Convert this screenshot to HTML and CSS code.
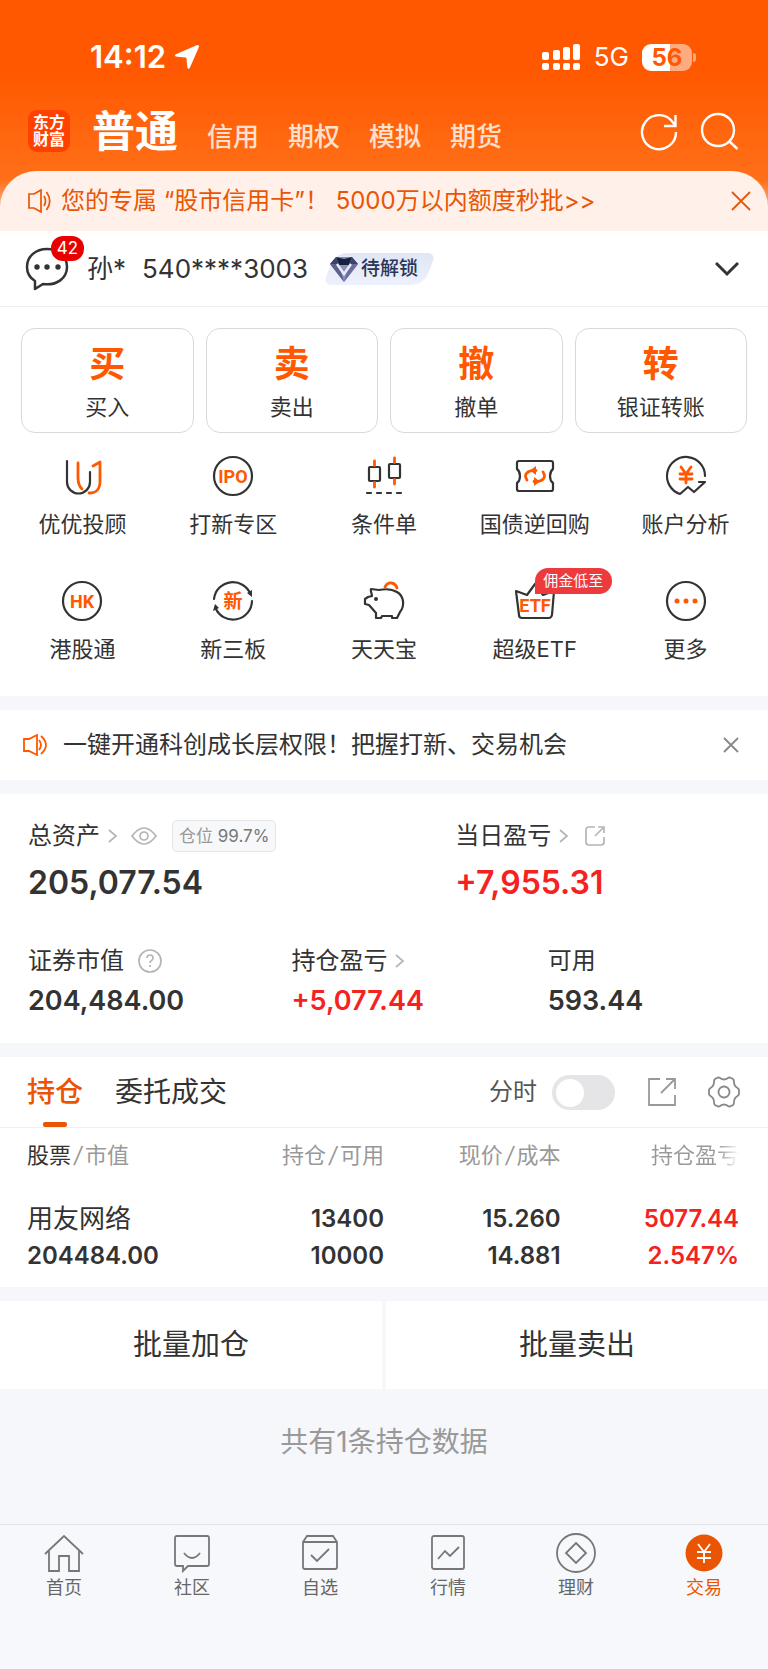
FILE: index.html
```html
<!DOCTYPE html>
<html lang="zh-CN">
<head>
    <meta charset="UTF-8">
    <meta name="viewport" content="width=device-width, initial-scale=1.0">
    <title>交易</title>
    <link rel="stylesheet" href="styles.css">
</head>
<body>
    <header class="header">
        <div class="status-bar">
            <div class="status-left">
                <span class="status-time">14:12</span>
                <svg width="26" height="26" viewBox="0 0 26 26"><path d="M22 1.500Q26 0 24.500 4L16 23.500Q14.500 26.500 13.300 23L12.500 14.500Q12.400 13.600 11.500 13.500L3 12.700Q-1 12 2.500 10Z" fill="#fff"/></svg>
            </div>
            <div class="status-right">
                <svg width="40" height="28" viewBox="0 0 40 28" fill="#fff">
                    <rect x="1" y="9" width="7" height="8" rx="2"/><rect x="12" y="7" width="7" height="10" rx="2"/><rect x="22" y="4" width="7" height="13" rx="2"/><rect x="32" y="1" width="7" height="16" rx="2"/>
                    <rect x="1" y="20" width="7" height="7" rx="2"/><rect x="12" y="20" width="7" height="7" rx="2"/><rect x="22" y="20" width="7" height="7" rx="2"/><rect x="32" y="20" width="7" height="7" rx="2"/>
                </svg>
                <span class="network">5G</span>
                <div class="battery"><span>56</span></div>
            </div>
        </div>
        <nav class="top-nav">
            <div class="logo"><span>东方</span><span>财富</span></div>
            <a href="#" class="nav-active">普通</a>
            <a href="#">信用</a>
            <a href="#">期权</a>
            <a href="#">模拟</a>
            <a href="#">期货</a>
            <div class="nav-actions">
                <button type="button" aria-label="刷新">
                    <svg width="40" height="40" viewBox="0 0 40 40" fill="none" stroke="#fff" stroke-width="2.400"><path d="M36 20A17 17 0 1 1 33 10.500L35.500 13.500M35.500 3V14H24"/></svg>
                </button>
                <button type="button" aria-label="搜索">
                    <svg width="40" height="40" viewBox="0 0 40 40" fill="none" stroke="#fff" stroke-width="2.400"><circle cx="18" cy="18" r="16"/><path d="M29.500 29.500L37.500 37"/></svg>
                </button>
            </div>
        </nav>
    </header>

    <div class="banner">
        <svg width="24" height="24" viewBox="0 0 24 24" fill="none" stroke="#ea5504" stroke-width="1.700"><path d="M2 5H7L14 1V23L7 19H2ZM17 7Q20 12 17 17M19.500 3Q26 12 19.500 21"/></svg>
        <a href="#">您的专属 “股市信用卡”！ 5000万以内额度秒批&gt;&gt;</a>
        <button type="button" aria-label="关闭">
            <svg width="20" height="20" viewBox="0 0 20 20" fill="none" stroke="#ea5504" stroke-width="1.800"><path d="M1 1L19 19M19 1L1 19"/></svg>
        </button>
    </div>

    <div class="account">
        <a href="#" class="message" aria-label="消息">
            <svg width="44" height="44" viewBox="0 0 44 44" fill="none" stroke="#333" stroke-width="2.500" stroke-linejoin="round"><path d="M22 2C11 2 2 9 2 20C2 27 5 31 10 34V42L18 37C32 39 42 31 42 20C42 9 33 2 22 2Z"/><g fill="#333" stroke="none"><circle cx="12" cy="20" r="2.700"/><circle cx="22" cy="20" r="2.700"/><circle cx="33" cy="20" r="2.700"/></g></svg>
            <span class="message-count">42</span>
        </a>
        <span class="account-name">孙*</span>
        <span class="account-number">540****3003</span>
        <a href="#" class="level">
            <svg width="28" height="28" viewBox="0 0 28 28"><path d="M6 2H22L28 9L14 27L0 9Z" fill="#8b8fba"/><path d="M6 2L14 4L22 2L19 10H9Z" fill="#16203f"/><path d="M0 9L6 2L9 10ZM28 9L22 2L19 10Z" fill="#3c4269"/><path d="M0 9L9 10L14 27Z" fill="#5b608f"/><path d="M28 9L19 10L14 27Z" fill="#6d6ba0"/><path d="M7 9L14 19L21 9" fill="none" stroke="#e8eaf6" stroke-width="2.500"/></svg>
            <span>待解锁</span>
        </a>
        <button type="button" class="expand" aria-label="展开">
            <svg width="24" height="16" viewBox="0 0 24 16" fill="none" stroke="#333" stroke-width="3"><path d="M1 2L12 13L23 2"/></svg>
        </button>
    </div>

    <main>
        <section class="trade">
            <div class="trade-buttons">
                <button type="button"><strong>买</strong>买入</button>
                <button type="button"><strong>卖</strong>卖出</button>
                <button type="button"><strong>撤</strong>撤单</button>
                <button type="button"><strong>转</strong>银证转账</button>
            </div>
            <div class="services">
                <a href="#">
                    <svg class="icon" viewBox="0 0 40 40"><path d="M5 5V26A11.500 11.500 0 0 0 28 26V16"/><path class="accent" d="M16 7V22C16 28 18 31 20 33M31 10L38 6V25C38 34 34 37 27 37"/></svg>
                    优优投顾
                </a>
                <a href="#">
                    <svg class="icon" viewBox="0 0 40 40"><circle cx="20" cy="20" r="19"/><text x="20" y="27" font-size="18">IPO</text></svg>
                    打新专区
                </a>
                <a href="#">
                    <svg class="icon" viewBox="0 0 40 40"><rect x="5" y="11" width="11" height="14" rx="1"/><rect x="25" y="8" width="11" height="14" rx="1"/><path d="M3 37H7M13 37H17M23 37H27M33 37H37"/><path class="accent" d="M10.500 5V9.500M10.500 26.500V31M30.500 2V6.500M30.500 23.500V28"/></svg>
                    条件单
                </a>
                <a href="#">
                    <svg class="icon" viewBox="0 0 40 40"><path d="M4 5H36Q38 5 38 7V13C34 16 34 24 38 27V33Q38 35 36 35H4Q2 35 2 33V27C6 24 6 16 2 13V7Q2 5 4 5Z"/><path class="accent" d="M12 24C8 18 13 14 21 14.500M28 16C32 22 27 26 19 25.500"/><path class="fill" d="M15 14.500L21 10V19ZM25 25.500L19 21V30Z"/></svg>
                    国债逆回购
                </a>
                <a href="#">
                    <svg class="icon" viewBox="0 0 40 40"><path d="M39 20A19 19 0 1 0 14 38L22 31L28 36L39 26H33"/><path class="accent" d="M15 11L20 18L25 11M20 18V27M14 18H26M14 23H26"/></svg>
                    账户分析
                </a>
                <a href="#">
                    <svg class="icon" viewBox="0 0 40 40"><circle cx="20" cy="20" r="19"/><text x="20" y="27" font-size="18">HK</text></svg>
                    港股通
                </a>
                <a href="#">
                    <svg class="icon" viewBox="0 0 40 40"><path d="M1 18A19 19 0 0 1 37.500 13M39 20A19 19 0 0 1 2.500 27"/><path class="dark" d="M34 12L39 9V16ZM0 30L2 23L6 27Z"/><text x="20" y="27" font-size="19">新</text></svg>
                    新三板
                </a>
                <a href="#">
                    <svg class="icon" viewBox="0 0 40 40"><path d="M8 15C8 12 6 10 7 8L15 9C20 8 28 8 33 11C40 15 41 25 36 31L33 37H28V35H18L17 37H12V32L5 24L1 23V18L4 16Z"/><circle class="dark" cx="12" cy="18" r="2"/><path class="accent" d="M21 6C24 0 31 1 33 7"/></svg>
                    天天宝
                </a>
                <a href="#">
                    <svg class="icon" viewBox="0 0 40 40"><path d="M1 10L12 14L20 3L28 14L39 10L37 34Q36 37 34 37H7Q4 37 4 34Z"/><text x="20" y="31" font-size="18">ETF</text></svg>
                    <span class="tag">佣金低至</span>
                    超级ETF
                </a>
                <a href="#">
                    <svg class="icon" viewBox="0 0 40 40"><circle cx="20" cy="20" r="19"/><circle class="fill" cx="11" cy="20" r="2.500"/><circle class="fill" cx="20" cy="20" r="2.500"/><circle class="fill" cx="29" cy="20" r="2.500"/></svg>
                    更多
                </a>
            </div>
        </section>

        <section class="notice">
            <svg width="24" height="22" viewBox="0 0 24 22" fill="none" stroke="#ff5800" stroke-width="1.800"><path d="M1 5H6L14 1V21L6 17H1ZM16 6Q20 11 16 16M18 2Q28 11 18 20"/></svg>
            <a href="#">一键开通科创成长层权限！把握打新、交易机会</a>
            <button type="button" aria-label="关闭">
                <svg width="16" height="16" viewBox="0 0 16 16" fill="none" stroke="#888" stroke-width="1.800"><path d="M1 1L15 15M15 1L1 15"/></svg>
            </button>
        </section>

        <section class="assets">
            <div class="assets-main">
                <div>
                    <div class="label">总资产
                        <svg class="arrow" viewBox="0 0 10 14"><path d="M1 1L8 7L1 13"/></svg>
                        <svg class="eye" viewBox="0 0 28 20"><path d="M2 10Q14-6 26 10Q14 26 2 10Z"/><circle cx="14" cy="10" r="4"/></svg>
                        <span class="position">仓位 <b>99.7%</b></span>
                    </div>
                    <div class="total">205,077.54</div>
                </div>
                <div>
                    <div class="label">当日盈亏
                        <svg class="arrow" viewBox="0 0 10 14"><path d="M1 1L8 7L1 13"/></svg>
                        <svg class="share" viewBox="0 0 20 20"><path d="M10 1H4Q1 1 1 4V16Q1 19 4 19H16Q19 19 19 16V11M10 10L18 2M13 1H19V7"/></svg>
                    </div>
                    <div class="total up">+7,955.31</div>
                </div>
            </div>
            <div class="assets-sub">
                <div>
                    <div class="label">证券市值
                        <svg class="help" viewBox="0 0 24 24"><circle cx="12" cy="12" r="11"/><path d="M9 9C9 5 15 5 15 9C15 12 12 11 12 14M12 16V18"/></svg>
                    </div>
                    <div class="amount">204,484.00</div>
                </div>
                <div>
                    <div class="label">持仓盈亏
                        <svg class="arrow" viewBox="0 0 10 14"><path d="M1 1L8 7L1 13"/></svg>
                    </div>
                    <div class="amount up">+5,077.44</div>
                </div>
                <div>
                    <div class="label">可用</div>
                    <div class="amount">593.44</div>
                </div>
            </div>
        </section>

        <section class="holdings">
            <div class="holdings-bar">
                <a href="#" class="tab active">持仓</a>
                <a href="#" class="tab">委托成交</a>
                <label class="switch-label" for="minute">分时</label>
                <input type="checkbox" class="switch" id="minute">
                <button type="button" aria-label="分享">
                    <svg width="28" height="28" viewBox="0 0 28 28" fill="none" stroke="#999" stroke-width="1.800"><path d="M12 1H1V27H27V17M18 1H27V11M13 15L26 2"/></svg>
                </button>
                <button type="button" aria-label="设置">
                    <svg width="32" height="32" viewBox="0 0 32 32" fill="none" stroke="#888" stroke-width="1.800"><path d="M9 2Q10.500 1 12 2Q16 5 20 2Q21.500 1 23 2L25 3Q26 4 26 6Q26 10 29.500 12Q31 13 31 14V18Q31 19 29.500 20Q26 22 26 26Q26 28 25 29L23 30Q21.500 31 20 30Q16 27 12 30Q10.500 31 9 30L7 29Q6 28 6 26Q6 22 2.500 20Q1 19 1 18V14Q1 13 2.500 12Q6 10 6 6Q6 4 7 3Z"/><circle cx="16" cy="16" r="5.500"/></svg>
                </button>
            </div>
            <table class="stocks">
                <thead>
                    <tr>
                        <th><b>股票</b><i>/</i>市值</th>
                        <th>持仓<i>/</i>可用</th>
                        <th>现价<i>/</i>成本</th>
                        <th class="fade">持仓盈亏</th>
                    </tr>
                </thead>
                <tbody>
                    <tr>
                        <td><span class="stock-name">用友网络</span>204484.00</td>
                        <td><span>13400</span>10000</td>
                        <td><span>15.260</span>14.881</td>
                        <td class="up"><span>5077.44</span>2.547%</td>
                    </tr>
                </tbody>
            </table>
        </section>

        <div class="batch">
            <button type="button">批量加仓</button>
            <button type="button">批量卖出</button>
        </div>

        <p class="summary">共有1条持仓数据</p>
    </main>

    <nav class="tab-bar">
        <a href="#">
            <svg viewBox="0 0 40 40"><path d="M1 21L20 3L39 21M5 18V38H15V23H25V38H35V18"/></svg>
            首页
        </a>
        <a href="#">
            <svg viewBox="0 0 40 40"><path d="M5 3H35Q37 3 37 5V31Q37 33 35 33H16L11 38V33H5Q3 33 3 31V5Q3 3 5 3ZM12 20Q20 30 28 20"/></svg>
            社区
        </a>
        <a href="#">
            <svg viewBox="0 0 40 40"><path d="M3 9L7 3H33L37 9V34Q37 36 35 36H5Q3 36 3 34ZM3 9H37M11 22L17 28L29 16"/></svg>
            自选
        </a>
        <a href="#">
            <svg viewBox="0 0 40 40"><rect x="4" y="3" width="32" height="33" rx="2"/><path d="M10 26L17 18L22 23L31 14"/></svg>
            行情
        </a>
        <a href="#">
            <svg viewBox="0 0 40 40"><circle cx="20" cy="20" r="19"/><path d="M20 10L30 20L20 30L10 20Z"/></svg>
            理财
        </a>
        <a href="#" class="current">
            <svg viewBox="0 0 40 40"><circle cx="20" cy="20" r="18.500"/><path d="M14 11L20 19L26 11M20 19V30M13 19H27M13 25H27"/></svg>
            交易
        </a>
    </nav>
</body>
</html>
```

FILE: styles.css
```css
* {
    box-sizing: border-box;
}

body {
    margin: 0;
    min-height: 100vh;
    display: flex;
    flex-direction: column;
    font-family: Inter, 'Noto Sans CJK SC', sans-serif;
    font-size: 24px;
    line-height: 32px;
    color: #333;
    background: linear-gradient(#ff5800 70px, #ff7019 180px, #f6f7fa 240px);
}

a {
    color: inherit;
    text-decoration: none;
}

button {
    padding: 0;
    border: none;
    background: none;
    font: inherit;
    color: inherit;
    cursor: pointer;
}

svg {
    display: block;
    flex-shrink: 0;
}

.header {
    color: #fff;
}

.status-bar {
    display: flex;
    justify-content: space-between;
    align-items: center;
    padding: 41px 76px 0 90px;
}

.status-left,
.status-right {
    display: flex;
    align-items: center;
}

.status-left {
    gap: 8px;
}

.status-time {
    font-size: 31px;
    font-weight: 600;
}

.network {
    margin: 0 13px;
    font-size: 26px;
}

.battery {
    position: relative;
    width: 50px;
    height: 27px;
    border-radius: 9px;
    background: linear-gradient(90deg, #fff 56%, #ffab80 56%);
    color: #ff5800;
    font-size: 24px;
    font-weight: 700;
    line-height: 27px;
    text-align: center;
}

.battery::after {
    content: "";
    position: absolute;
    top: 9px;
    right: -4px;
    width: 3px;
    height: 9px;
    border-radius: 0 4px 4px 0;
    background: #ffab80;
}

.top-nav {
    display: flex;
    align-items: flex-end;
    gap: 29px;
    padding: 28px 28px 19px;
    height: 98px;
    font-size: 26px;
    font-weight: 500;
    line-height: 30px;
    color: #ffe0cf;
}

.logo {
    width: 42px;
    height: 42px;
    padding: 4px 0;
    margin-right: -7px;
    border-radius: 9px;
    background: #ff4100;
    color: #fff;
    font-size: 16px;
    font-weight: 700;
    line-height: 17px;
    text-align: center;
}

.logo span {
    display: block;
}

.top-nav .nav-active {
    font-size: 43px;
    font-weight: 700;
    line-height: 42px;
    color: #fff;
}

.nav-actions {
    display: flex;
    gap: 20px;
    margin-left: auto;
}

.banner {
    display: flex;
    align-items: center;
    gap: 10px;
    height: 60px;
    padding: 0 17px 0 27px;
    border-radius: 36px 36px 0 0;
    background: #fff1ea;
    color: #ea5504;
}

.banner button,
.notice button {
    margin-left: auto;
}

.account {
    display: flex;
    align-items: center;
    height: 76px;
    padding: 0 29px 0 25px;
    border-bottom: 1px solid #eee;
    background: #fff;
    font-size: 26px;
}

.message {
    position: relative;
    margin-right: 18px;
}

.message-count {
    position: absolute;
    top: -11px;
    left: 26px;
    width: 33px;
    border-radius: 12px;
    background: #e80000;
    color: #fff;
    font-size: 17px;
    line-height: 25px;
    text-align: center;
}

.account-number {
    margin: 0 16px;
}

.level {
    position: relative;
    z-index: 0;
    display: flex;
    align-items: center;
    gap: 3px;
    height: 32px;
    padding: 0 17px 0 6px;
    color: #2c3558;
    font-size: 19px;
    font-weight: 500;
}

/* slanted plate behind the level name */
.level::before {
    content: "";
    position: absolute;
    inset: 0 5px;
    z-index: -1;
    border-radius: 12px 8px;
    background: linear-gradient(#e0e6f5, #edf1fd);
    transform: skewX(-20deg);
}

.expand {
    margin-left: auto;
}

main {
    flex: 1;
    background: #f6f7fa;
}

section {
    margin-bottom: 14px;
    background: #fff;
}

.trade {
    padding: 21px 7px 31px;
    font-size: 22px;
}

.trade-buttons {
    display: grid;
    grid-template-columns: repeat(4, 1fr);
    gap: 12px;
    padding: 0 14px;
}

.trade-buttons button {
    height: 105px;
    padding-top: 4px;
    border: 1px solid #d9d9d9;
    border-radius: 14px;
    line-height: 30px;
}

.trade-buttons strong {
    display: block;
    margin-bottom: 7px;
    color: #ff5800;
    font-size: 36px;
    font-weight: 700;
    line-height: 42px;
}

.services {
    display: grid;
    grid-template-columns: repeat(5, 1fr);
    row-gap: 41px;
    padding-top: 23px;
}

.services a {
    position: relative;
    display: flex;
    flex-direction: column;
    align-items: center;
    gap: 12px;
}

.icon {
    width: 40px;
    height: 40px;
    overflow: visible;
    fill: none;
    stroke: #333;
    stroke-width: 2.2;
    stroke-linecap: round;
    stroke-linejoin: round;
}

.icon text {
    fill: #ff5800;
    stroke: none;
    font-family: Roboto, 'Noto Sans CJK SC', sans-serif;
    font-weight: 700;
    text-anchor: middle;
}

.icon .accent {
    stroke: #ff5800;
    stroke-width: 2.8;
}

.icon .fill {
    fill: #ff5800;
    stroke: none;
}

.icon .dark {
    fill: #333;
    stroke: none;
}

.tag {
    position: absolute;
    top: -13px;
    left: 50%;
    width: 77px;
    border-radius: 13px 13px 13px 0;
    background: #ec3a3d;
    color: #fff;
    font-size: 15px;
    line-height: 26px;
    text-align: center;
}

.notice {
    display: flex;
    align-items: center;
    gap: 16px;
    height: 70px;
    padding: 0 29px 0 23px;
}

.assets {
    padding: 26px 28px;
}

.assets-main {
    display: grid;
    grid-template-columns: 60% 1fr;
}

.assets-sub {
    display: grid;
    grid-template-columns: 37% 36% 1fr;
    padding-top: 42px;
}

.label {
    display: flex;
    align-items: center;
}

.label svg {
    fill: none;
    stroke: #b5b5b5;
    stroke-width: 1.7;
}

.arrow {
    width: 10px;
    height: 14px;
    margin-left: 8px;
}

.eye {
    width: 28px;
    height: 20px;
    margin: 0 14px 0 12px;
}

.share {
    width: 20px;
    height: 20px;
    margin-left: 16px;
}

.help {
    width: 24px;
    height: 24px;
    margin-left: 14px;
}

.position {
    padding: 0 6px;
    border: 1px solid #e5e5e8;
    border-radius: 5px;
    background: #f7f8fa;
    color: #999;
    font-size: 17px;
    line-height: 30px;
}

.position b {
    color: #777;
    font-weight: 400;
}

.total {
    margin-top: 11px;
    font-size: 32px;
    font-weight: 600;
    line-height: 40px;
}

.amount {
    margin-top: 8px;
    font-size: 27px;
    font-weight: 600;
    line-height: 32px;
}

.up {
    color: #f52222;
}

.holdings-bar {
    display: flex;
    align-items: center;
    height: 71px;
    padding: 0 28px 0 27px;
    border-bottom: 1px solid #f0f0f0;
}

.tab {
    position: relative;
    margin-right: 32px;
    font-size: 28px;
    line-height: 70px;
}

.tab.active {
    color: #ea5504;
    font-weight: 500;
}

.tab.active::after {
    content: "";
    position: absolute;
    left: 50%;
    bottom: 0;
    width: 24px;
    height: 5px;
    margin-left: -12px;
    border-radius: 2px;
    background: #ea5504;
}

.switch-label {
    margin-left: auto;
    color: #555;
}

.switch {
    appearance: none;
    width: 63px;
    height: 35px;
    margin: 0 33px 0 15px;
    padding: 4px;
    border-radius: 18px;
    background: #e5e5e7;
}

.switch::before {
    content: "";
    display: block;
    width: 28px;
    height: 28px;
    border-radius: 50%;
    background: #fff;
}

.holdings-bar button + button {
    margin-left: 32px;
}

.stocks {
    width: 100%;
    border-collapse: collapse;
    table-layout: fixed;
    text-align: right;
}

.stocks th {
    padding: 11px 0 14px;
    color: #999;
    font-size: 22px;
    font-weight: 400;
    text-align: right;
}

.stocks th b {
    color: #333;
    font-weight: 400;
}

.stocks i {
    padding: 0 3px;
}

.stocks td {
    padding: 15px 0 13px;
    font-weight: 600;
    line-height: 36px;
}

.stocks td span {
    display: block;
    line-height: 38px;
}

.stocks td .stock-name {
    font-size: 26px;
    font-weight: 400;
}

.stocks th:first-child,
.stocks td:first-child {
    width: 27%;
    padding-left: 27px;
    text-align: left;
}

.stocks th:nth-child(2),
.stocks th:nth-child(3) {
    width: 23%;
}

.stocks th:last-child,
.stocks td:last-child {
    padding-right: 29px;
}

.stocks .fade {
    background: linear-gradient(90deg, #999 76%, #fff 86%);
    background-clip: text;
    color: transparent;
}

.batch {
    display: grid;
    grid-template-columns: 1fr 1fr;
    gap: 4px;
}

.batch button {
    height: 88px;
    background: #fff;
    font-size: 29px;
}

.summary {
    margin: 0;
    padding: 37px 0 60px;
    color: #999;
    font-size: 28px;
    text-align: center;
}

.tab-bar {
    display: grid;
    grid-template-columns: repeat(6, 1fr);
    padding: 8px 0 66px;
    border-top: 1px solid #e4e5e8;
    background: #f7f8fb;
    color: #666;
    font-size: 18px;
    line-height: 30px;
}

.tab-bar a {
    display: flex;
    flex-direction: column;
    align-items: center;
}

.tab-bar svg {
    width: 40px;
    height: 40px;
    fill: none;
    stroke: #777;
    stroke-width: 1.8;
}

.tab-bar .current {
    color: #ea5504;
}

.tab-bar .current circle {
    fill: #ea5504;
    stroke: none;
}

.tab-bar .current path {
    stroke: #fff;
}
```
